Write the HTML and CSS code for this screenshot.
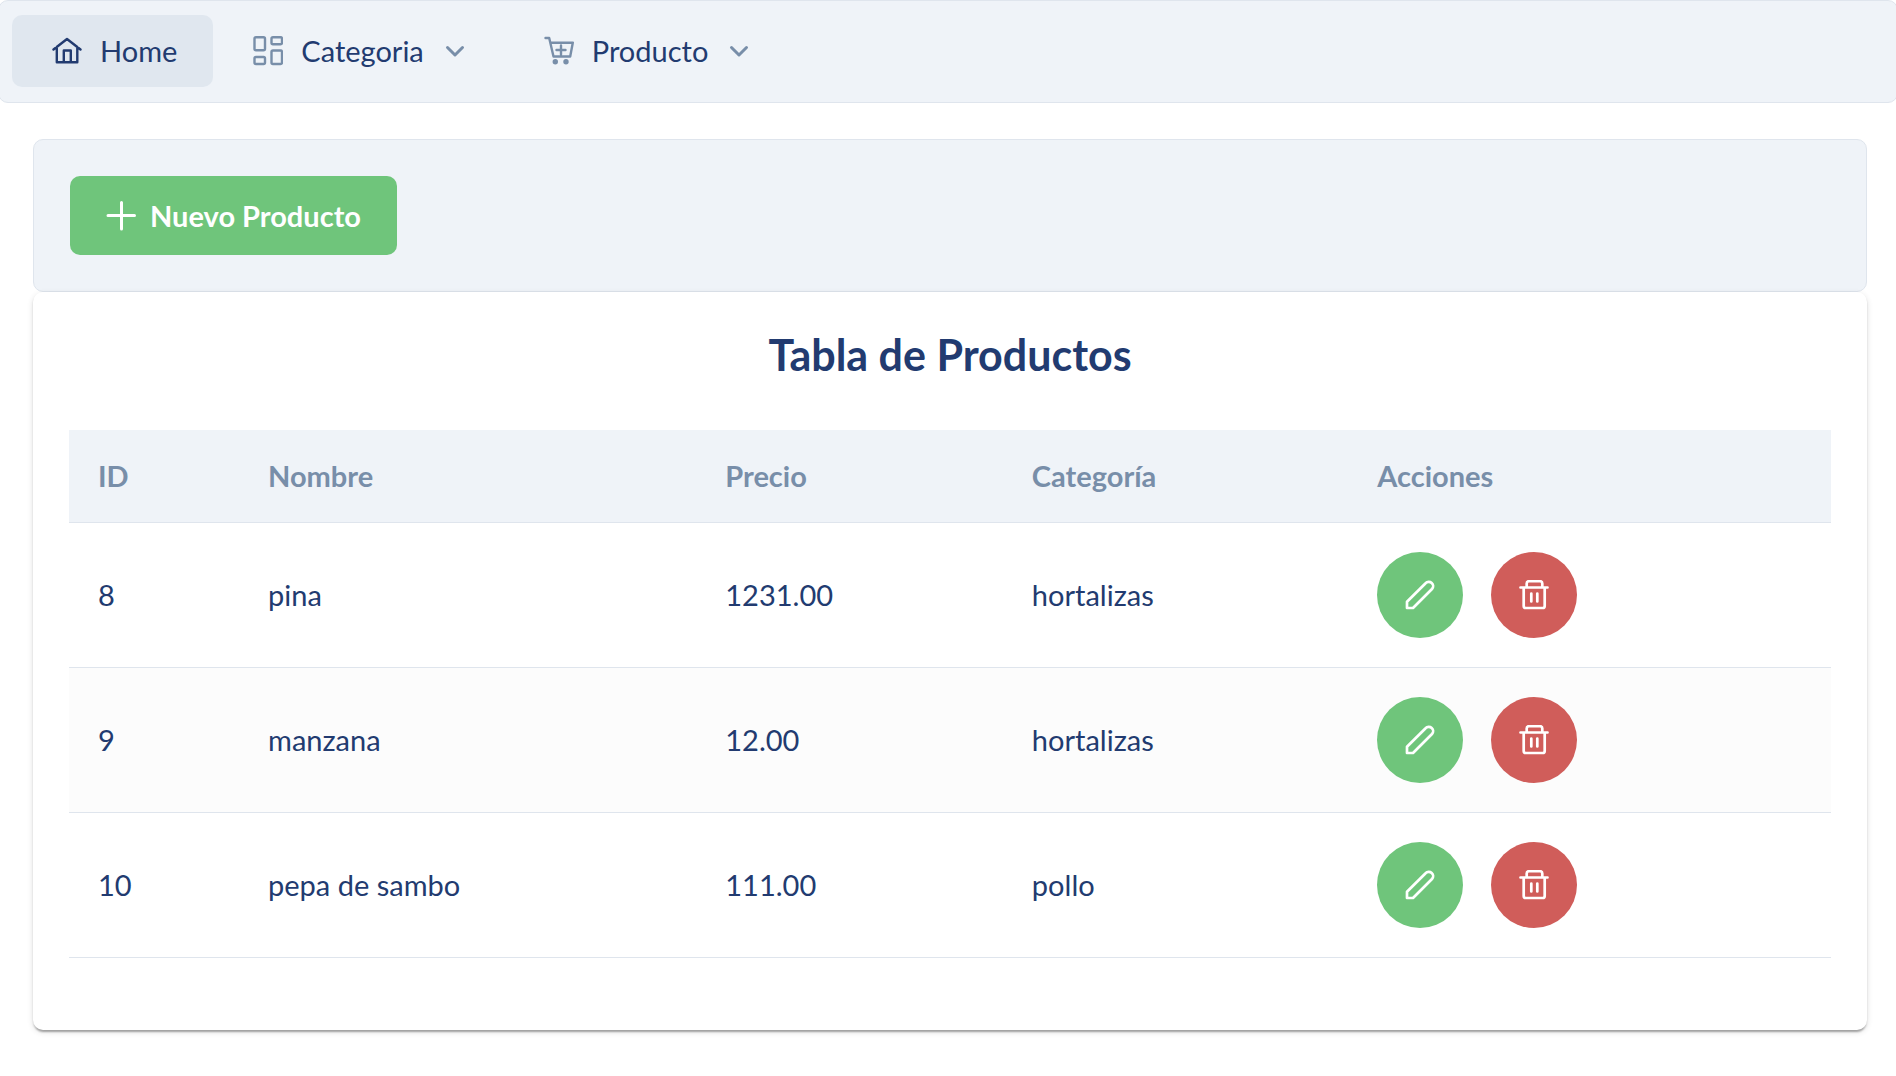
FILE: index.html
```html
<!DOCTYPE html>
<html lang="es">
<head>
<meta charset="utf-8">
<meta name="viewport" content="width=device-width, initial-scale=1">
<title>Productos</title>
<link rel="stylesheet" href="styles.css">
</head>
<body>
<svg class="sprite" aria-hidden="true">
  <symbol id="pencil" viewBox="0 0 30 30"><path d="M2 28V21.8L20.6 3.2A4.3 4.3 0 0 1 27 9L8 28Z"/></symbol>
  <symbol id="trash" viewBox="0 0 30 30"><path d="M1.5 7.5H28.5M4.7 7.5V26a2 2 0 0 0 2 2H23.700a2 2 0 0 0 2-2V7.500M7.700 7.500V3.500a2.300 2.300 0 0 1 2.300-2.300H21a2.300 2.300 0 0 1 2.300 2.300V7.500M12.300 13.500V21.500M18.300 13.500V21.500"/></symbol>
  <symbol id="chevron" viewBox="-3 -3 26 26"><path d="M2.500 6.500 10 14 17.500 6.500"/></symbol>
</svg>
<nav class="menubar">
  <ul class="menu">
    <li><a class="menu-link active" href="#">
      <svg class="icon" viewBox="0 0 30 30" aria-hidden="true"><path d="M1.500 13.500 15 3 28.500 13.500M4.800 11V26.300H25.300V11M11.800 26V14.500H18.800V26"/></svg>
      <span>Home</span></a></li>
    <li><a class="menu-link" href="#">
      <svg class="icon" viewBox="0 0 30 30" aria-hidden="true"><rect x="1.500" y="1.300" width="10.500" height="13" rx="1.500"/><rect x="18.500" y="1.300" width="10.500" height="7" rx="1.500"/><rect x="1.500" y="21" width="10.500" height="7" rx="1.500"/><rect x="18.500" y="14.500" width="10.500" height="13.500" rx="1.500"/></svg>
      <span>Categoria</span>
      <svg class="chevron" aria-hidden="true"><use href="#chevron"/></svg></a></li>
    <li><a class="menu-link" href="#">
      <svg class="icon" viewBox="0 0 30 30" aria-hidden="true"><path d="M1.500 2H5.200L9.500 20.500H26.200L28.800 6.700H6.500M17 9.500V18.500M12.500 14H21.500"/><circle class="dot" cx="11.300" cy="25.700" r="2.700"/><circle class="dot" cx="22" cy="25.700" r="2.700"/></svg>
      <span>Producto</span>
      <svg class="chevron" aria-hidden="true"><use href="#chevron"/></svg></a></li>
  </ul>
</nav>
<main class="page">
  <div class="toolbar">
    <button class="new-button" type="button">
      <svg class="icon plus" viewBox="0 0 30 30" aria-hidden="true"><path d="M2 14.500H28.500M15.500 1.500V28"/></svg>
      <span>Nuevo Producto</span>
    </button>
  </div>
  <section class="card">
    <h2 class="title">Tabla de Productos</h2>
    <table class="products">
      <colgroup>
        <col class="col-id"><col class="col-name"><col class="col-price"><col class="col-category"><col>
      </colgroup>
      <thead>
        <tr><th scope="col">ID</th><th scope="col">Nombre</th><th scope="col">Precio</th><th scope="col">Categoría</th><th scope="col">Acciones</th></tr>
      </thead>
      <tbody>
        <tr><td>8</td><td>pina</td><td>1231.00</td><td>hortalizas</td><td><div class="actions">
          <button class="round edit" type="button" aria-label="Editar pina"><svg class="icon" aria-hidden="true"><use href="#pencil"/></svg></button>
          <button class="round delete" type="button" aria-label="Eliminar pina"><svg class="icon" aria-hidden="true"><use href="#trash"/></svg></button></div></td></tr>
        <tr><td>9</td><td>manzana</td><td>12.00</td><td>hortalizas</td><td><div class="actions">
          <button class="round edit" type="button" aria-label="Editar manzana"><svg class="icon" aria-hidden="true"><use href="#pencil"/></svg></button>
          <button class="round delete" type="button" aria-label="Eliminar manzana"><svg class="icon" aria-hidden="true"><use href="#trash"/></svg></button></div></td></tr>
        <tr><td>10</td><td>pepa de sambo</td><td>111.00</td><td>pollo</td><td><div class="actions">
          <button class="round edit" type="button" aria-label="Editar pepa de sambo"><svg class="icon" aria-hidden="true"><use href="#pencil"/></svg></button>
          <button class="round delete" type="button" aria-label="Eliminar pepa de sambo"><svg class="icon" aria-hidden="true"><use href="#trash"/></svg></button></div></td></tr>
      </tbody>
    </table>
  </section>
</main>
</body>
</html>
```
FILE: styles.css
```css
:root {
  --text: #223b70;
  --muted: #788ea9;
  --surface: #eff3f8;
  --line: #dfe5ed;
  --green: #6fc57b;
  --red: #d05d5a;
}

* {
  box-sizing: border-box;
}

body {
  margin: 0;
  overflow-x: hidden;
  background: #fff;
  color: var(--text);
  font-family: Lato, "Liberation Sans", sans-serif;
  font-size: 29px;
  line-height: 36px;
}

svg {
  flex: none;
  fill: none;
  stroke: currentColor;
  stroke-width: 2.4;
  stroke-linecap: round;
  stroke-linejoin: round;
}

.sprite {
  position: absolute;
  width: 0;
  height: 0;
}

.icon {
  width: 30px;
  height: 30px;
}

.dot {
  fill: currentColor;
  stroke: none;
}

.menubar {
  margin: 0 -2px;
  padding: 14px 13px 15px;
  background: var(--surface);
  border: 1px solid var(--line);
  border-radius: 10px;
}

.menu {
  display: flex;
  margin: 0;
  padding: 0;
  list-style: none;
}

.menu-link {
  display: flex;
  align-items: center;
  gap: 18px;
  height: 72px;
  padding: 0 36px 0 40px;
  border-radius: 10px;
  color: var(--text);
  text-decoration: none;
}

.menu-link.active {
  background: #e0e7ef;
}

.menu-link svg {
  color: var(--muted);
}

.menu-link.active svg {
  color: var(--text);
}

.chevron {
  width: 26px;
  height: 26px;
  stroke-width: 3;
}

.page {
  padding: 36px 29px 45px 33px;
}

.toolbar {
  display: flex;
  padding: 36px;
  background: var(--surface);
  border: 1px solid var(--line);
  border-radius: 10px;
}

button {
  border: 0;
  color: #fff;
  font: inherit;
}

.new-button {
  display: flex;
  align-items: center;
  gap: 14px;
  height: 79px;
  padding: 0 36px;
  border-radius: 10px;
  background: var(--green);
  font-weight: 700;
}

.plus {
  stroke-width: 3;
}

.card {
  padding: 36px 36px 72px;
  border-radius: 10px;
  background: #fff;
  box-shadow: 0 4px 2px -2px rgba(0, 0, 0, 0.2), 0 2px 2px rgba(0, 0, 0, 0.14), 0 2px 6px rgba(0, 0, 0, 0.12);
}

.title {
  margin: 0 0 48px;
  font-size: 43px;
  font-weight: 700;
  line-height: 54px;
  text-align: center;
}

.products {
  width: 100%;
  border-collapse: separate;
  border-spacing: 0;
  table-layout: fixed;
}

.col-id {
  width: 9.65%;
}

.col-name {
  width: 25.95%;
}

.col-price {
  width: 17.4%;
}

.col-category {
  width: 19.6%;
}

.products th,
.products td {
  padding: 28px 29px;
  border-bottom: 1px solid var(--line);
  text-align: left;
}

.products td {
  padding: 29px;
}

.products th {
  background: var(--surface);
  color: var(--muted);
  font-weight: 700;
}

.products tbody tr:nth-child(even) {
  background: #fcfcfc;
}

.actions {
  display: flex;
  gap: 28px;
}

.round {
  display: flex;
  align-items: center;
  justify-content: center;
  width: 86px;
  height: 86px;
  padding: 0;
  border-radius: 50%;
}

.round .icon {
  stroke-width: 2.7;
}

.edit {
  background: var(--green);
}

.delete {
  background: var(--red);
}
```
